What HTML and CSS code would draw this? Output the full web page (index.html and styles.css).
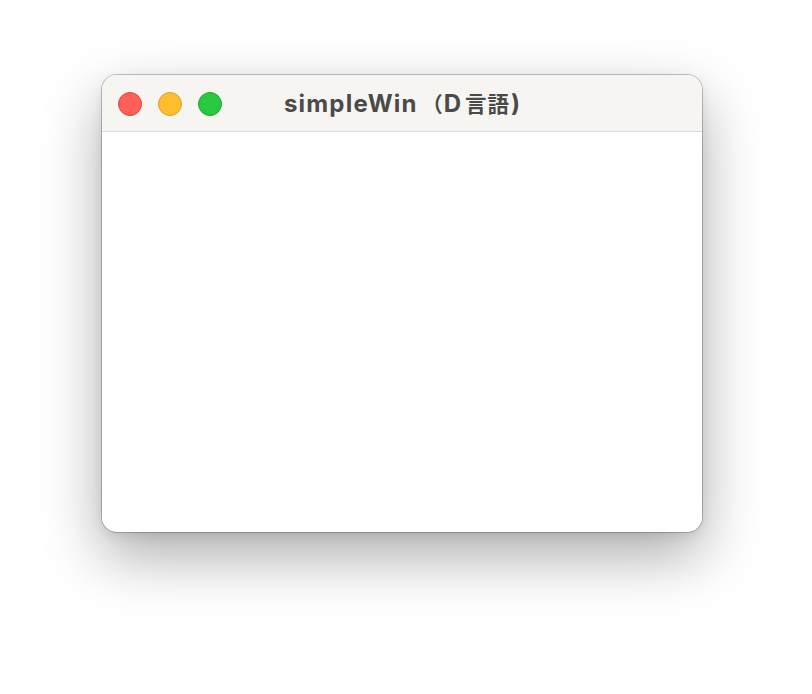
FILE: index.html
```html
<!DOCTYPE html>
<html lang="ja">
<head>
<meta charset="utf-8">
<title>simpleWin</title>
<link rel="stylesheet" href="styles.css">
</head>
<body>
<div class="window">
  <div class="titlebar">
    <div class="lights">
      <span class="light close"></span>
      <span class="light min"></span>
      <span class="light max"></span>
    </div>
    <div class="title"><span class="latin">simpleWin</span><span class="paren">（</span><span class="d">D</span><span class="kanji">言語</span><span class="close-paren">)</span></div>
  </div>
  <div class="content"></div>
</div>
</body>
</html>
```
FILE: styles.css
```css
html, body {
  margin: 0;
  padding: 0;
  background: #ffffff;
}
body {
  width: 812px;
  height: 694px;
  overflow: hidden;
  padding-top: 75px;
  padding-left: 102px;
  box-sizing: border-box;
}
.window {
  width: 600px;
  height: 457px;
  border-radius: 15px;
  background: #ffffff;
  box-shadow: 0 0 0 1px rgba(0,0,0,0.22), 0 24px 60px rgba(0,0,0,0.33), 0 4px 12px rgba(0,0,0,0.08);
  overflow: hidden;
  display: flex;
  flex-direction: column;
}
.titlebar {
  height: 56px;
  flex: 0 0 auto;
  background: #f6f5f1;
  border-bottom: 1px solid #dcdbd8;
  position: relative;
  display: flex;
  align-items: center;
  justify-content: center;
}
.lights {
  position: absolute;
  left: 16px;
  top: 17px;
  display: flex;
  gap: 16px;
}
.light {
  width: 24px;
  height: 24px;
  border-radius: 50%;
  box-sizing: border-box;
}
.close { background: #fe5f57; border: 1px solid #e0443e; }
.min { background: #febc2e; border: 1px solid #dea123; }
.max { background: #28c840; border: 1px solid #1aab29; }
.title {
  font-family: "Inter", "Noto Sans CJK JP", sans-serif;
  font-weight: 700;
  font-size: 24px;
  line-height: 28px;
  color: #4a4a4a;
  margin-top: 2px;
  margin-left: 0;
  white-space: pre;
  display: flex;
  align-items: baseline;
}
.latin {
  letter-spacing: 1.2px;
}
.paren {
  font-size: 21px;
  margin-left: 4px;
}
.d {
  margin-left: 1px;
}
.kanji {
  font-size: 21.5px;
  margin-left: 4px;
  letter-spacing: 1px;
}
.close-paren {
  margin-left: 1px;
}
.content {
  flex: 1 1 auto;
  background: #ffffff;
}
```
